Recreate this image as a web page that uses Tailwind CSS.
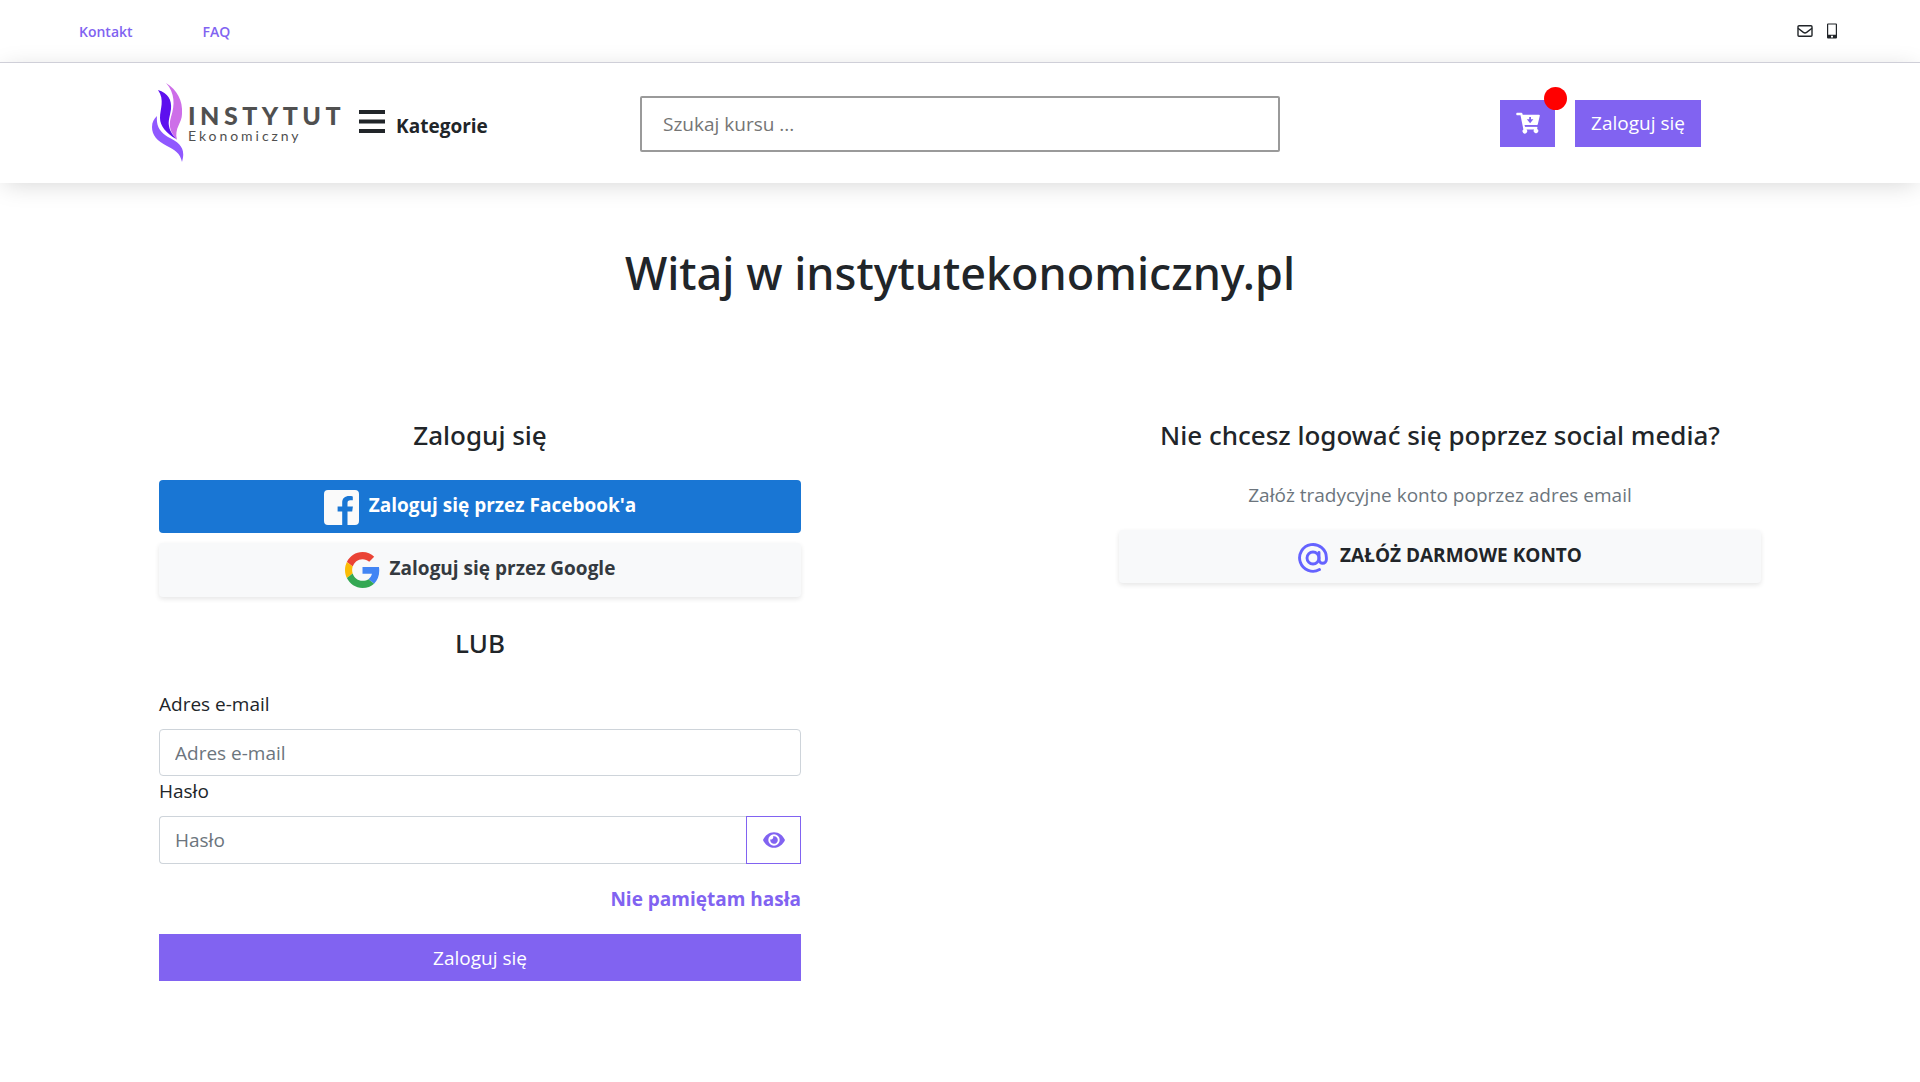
<!DOCTYPE html>
<html lang="pl">
<head>
<meta charset="utf-8">
<meta name="viewport" content="width=device-width, initial-scale=1">
<title>Instytut Ekonomiczny – logowanie</title>
<script src="https://cdn.jsdelivr.net/npm/@tailwindcss/browser@4"></script>
</head>
<body class="min-h-screen bg-white font-['Open_Sans','Noto_Sans',sans-serif] text-[19px] leading-[30px] text-[#212529]">
<div class="flex h-[62px] items-center justify-between pr-[83px] pl-[79px]">
  <nav class="flex gap-[70px] pt-[2px] text-[14px] font-semibold text-[#8163f1]">
    <a href="#kontakt">Kontakt</a>
    <a href="#faq">FAQ</a>
  </nav>
  <div class="flex items-center gap-[14px]">
    <a href="#mail" aria-label="E-mail">
      <svg class="h-4 w-4" viewBox="0 0 16 16" fill="none" stroke="#212529" stroke-width="1.4" stroke-linejoin="round"><rect x="1" y="2.700" width="14" height="10.600" rx="1"/><path d="M1 5.200 6.400 9.400Q8 10.500 9.600 9.400L15 5.200"/></svg>
    </a>
    <a href="#telefon" aria-label="Telefon">
      <svg class="h-4 w-[10px]" viewBox="0 0 10 16"><path fill="#212529" fill-rule="evenodd" d="M1 .5h8A1 1 0 0 1 10 1.500v13a1 1 0 0 1-1 1h-8A1 1 0 0 1 0 14.500V1.500A1 1 0 0 1 1 .5ZM1.200 1.500v10.300h7.600v-10.300ZM4 12.800h2v1.600H4Z"/></svg>
    </a>
  </div>
</div>
<header class="grid h-[121px] grid-cols-3 items-center border-t border-[#cfcfd8] bg-white shadow-[0_4px_24px_-4px_rgba(0,0,0,0.18)]">
  <div class="flex items-center pl-[152px]">
    <a href="#start" class="flex items-center gap-1" aria-label="Instytut Ekonomiczny">
      <svg class="h-[80px] w-[32px]" viewBox="0 0 32 80">
        <path fill="#cd6ee8" d="M14 0C25 7 31 17 30 31C30 40 22 45 25 57C19 50 16 44 19 34C23 22 23 10 14 0Z"/>
        <path fill="#5d10ee" d="M6 7C16 10 20 17 19 26C18 33 16 38 17 43C18 49 22 53 24 56C14 50 8 43 8 35C8 26 13 17 6 7Z"/>
        <path fill="#9058ff" d="M5 33C4 43 8 49 16 54C28 60 34 65 30 79C28 70 23 67 15 63C5 58 0 52 0 44C0 39 2 36 5 33Z"/>
      </svg>
      <span class="flex flex-col font-[Lato,sans-serif] text-[#505050]">
        <span class="text-[25px] leading-[26px] font-black tracking-[0.18em]">INSTYTUT</span>
        <span class="text-[14px] leading-4 tracking-[0.21em]">Ekonomiczny</span>
      </span>
    </a>
    <button type="button" class="ml-[14px] flex items-center gap-[11px] font-bold">
      <svg class="h-[26px] w-[26px]" viewBox="0 0 26 26"><path fill="#212529" d="M0 0h26v4H0zM0 9.500h26v4H0zM0 19h26v4H0z"/></svg>
      <span class="pt-[6px]">Kategorie</span>
    </button>
  </div>
  <input type="search" aria-label="Szukaj kursu" placeholder="Szukaj kursu ..." class="mt-[2px] h-14 w-full rounded-[2px] border-2 border-[#9a9a9a] px-[21px] placeholder:text-[#757575]">
  <div class="flex items-center justify-end gap-5 pr-[219px]">
    <button type="button" aria-label="Koszyk" class="relative flex h-[47px] w-[55px] items-center justify-center bg-[#8163f1]">
      <svg class="h-[22px] w-6" viewBox="0 0 24 22"><path fill="#fff" d="M1 .7h4.200q1 0 1.300 1l.2 1h16.300q1 0 .8 1l-2 8.500q-.3 1-1.200 1H8.800l.3 1.500h11.500q1 0 .8 1l-.3 1.200a2.300 2.300 0 1 1-3 .7H10.500a2.300 2.300 0 1 1-3.100-.2L4.500 3.200H1Q.3 3.200.3 2.500V1.400Q.3.700 1 .7Z"/><path fill="#8163f1" d="M13.200 5h1.800v2.300h2.400L14.100 11.300 10.800 7.300h2.400Z"/><path fill="#8163f1" d="M8.600 13.100h12.200v1.300H8.900z"/></svg>
      <span class="absolute -top-[13px] -right-3 size-[23px] rounded-full bg-[#f00]"></span>
    </button>
    <button type="button" class="h-[47px] bg-[#8163f1] px-4 text-white">Zaloguj się</button>
  </div>
</header>
<main>
  <h1 class="pt-[60px] text-center font-['Noto_Sans',sans-serif] text-[45px] leading-[60px] font-medium">Witaj w instytutekonomiczny.pl</h1>
  <div class="mt-[114px] grid grid-cols-2">
    <section class="flex flex-col px-[159px]">
      <h2 class="mb-[27px] text-center font-['Noto_Sans',sans-serif] text-[26px] leading-9 font-medium">Zaloguj się</h2>
      <button type="button" class="flex h-[53px] items-center justify-center gap-[10px] rounded bg-[#1976d4] font-bold text-white">
        <svg class="mt-[2px] size-[35px]" viewBox="0 0 35 35"><path fill="#fafafa" d="M4 0h27a4 4 0 0 1 4 4v27a4 4 0 0 1-4 4h-7.500V21.500h4.700l.7-5h-5.400v-3.600c0-1.800.8-2.700 2.800-2.700h2.500V6.400c-1-.2-2.200-.3-3.600-.3-4.300 0-7 2.300-7 6.500v3.900h-4.600v5h4.600V35H4a4 4 0 0 1-4-4V4a4 4 0 0 1 4-4Z"/></svg>
        <span class="mb-1">Zaloguj się przez Facebook'a</span>
      </button>
      <button type="button" class="mt-[10px] flex h-[54px] items-center justify-center gap-[10px] rounded bg-[#f8f9fa] font-bold text-[#343a40] shadow-[0_2px_5px_rgba(0,0,0,0.1)]">
        <svg class="h-9 w-[35px]" viewBox="0 0 48 48" preserveAspectRatio="none"><path fill="#ea4335" d="M24 9.500c3.540 0 6.710 1.220 9.210 3.600l6.850-6.850C35.900 2.380 30.470 0 24 0 14.620 0 6.510 5.380 2.560 13.220l7.980 6.190C12.430 13.720 17.740 9.500 24 9.500z"/><path fill="#4285f4" d="M46.980 24.550c0-1.570-.15-3.090-.38-4.550H24v9.020h12.940c-.58 2.960-2.260 5.480-4.780 7.180l7.730 6c4.510-4.180 7.090-10.360 7.090-17.650z"/><path fill="#fbbc05" d="M10.530 28.590c-.48-1.450-.76-2.990-.76-4.590s.27-3.140.76-4.590l-7.980-6.190C.92 16.460 0 20.120 0 24c0 3.880.92 7.540 2.560 10.780l7.970-6.190z"/><path fill="#34a853" d="M24 48c6.480 0 11.930-2.130 15.890-5.810l-7.730-6c-2.150 1.450-4.920 2.300-8.160 2.300-6.260 0-11.570-4.220-13.470-9.910l-7.980 6.190C6.510 42.620 14.620 48 24 48z"/></svg>
        <span class="mb-1">Zaloguj się przez Google</span>
      </button>
      <h2 class="my-7 text-center font-['Noto_Sans',sans-serif] text-[26px] leading-9 font-medium">LUB</h2>
      <form class="flex flex-col">
        <label for="email" class="mb-[10px]">Adres e-mail</label>
        <input id="email" type="email" placeholder="Adres e-mail" class="h-[47px] rounded border border-[#ced4da] px-[15px] placeholder:text-[#6c757d]">
        <label for="haslo" class="mb-[10px]">Hasło</label>
        <div class="flex h-12">
          <input id="haslo" type="password" placeholder="Hasło" class="min-w-0 flex-1 rounded-l border border-r-0 border-[#ced4da] px-[15px] placeholder:text-[#6c757d]">
          <button type="button" aria-label="Pokaż hasło" class="flex w-[55px] items-center justify-center border border-[#8163f1]">
            <svg class="h-5 w-[22px]" viewBox="0 0 22 20"><path fill="#8163f1" fill-rule="evenodd" d="M11 2.200C16 2.200 20 5.500 22 10c-2 4.500-6 7.800-11 7.800S2 14.500 0 10c2-4.500 6-7.800 11-7.800Zm0 2.100a5.700 5.700 0 1 0 0 11.400a5.700 5.700 0 0 0 0-11.400Z"/><path fill="#8163f1" d="M11 6.200a3.800 3.800 0 1 1-3.700 3q1.300.7 2.400-.4t.3-2.500Z"/></svg>
          </button>
        </div>
        <a href="#reset" class="mt-5 self-end font-bold text-[#8163f1]">Nie pamiętam hasła</a>
        <button type="submit" class="mt-5 h-[47px] bg-[#8163f1] text-white">Zaloguj się</button>
      </form>
    </section>
    <section class="flex flex-col px-[159px]">
      <h2 class="mb-[27px] text-center font-['Noto_Sans',sans-serif] text-[26px] leading-9 font-medium">Nie chcesz logować się poprzez social media?</h2>
      <p class="text-center text-[#6c757d]">Załóż tradycyjne konto poprzez adres email</p>
      <a href="#rejestracja" class="mt-5 flex h-[53px] items-center justify-center gap-3 rounded bg-[#f8f9fa] font-bold shadow-[0_2px_5px_rgba(0,0,0,0.1)]">
        <svg class="mt-[2px] size-[30px]" viewBox="0 0 30 30" fill="none" stroke="#6563ff" stroke-width="2.900" stroke-linecap="round"><path d="M21.500 26.600A13.400 13.400 0 1 1 28.400 15v1.500a3.700 3.700 0 0 1-7.400 0V9.500"/><circle cx="15" cy="15" r="6"/></svg>
        <span class="mb-1">ZAŁÓŻ DARMOWE KONTO</span>
      </a>
    </section>
  </div>
</main>
</body>
</html>
